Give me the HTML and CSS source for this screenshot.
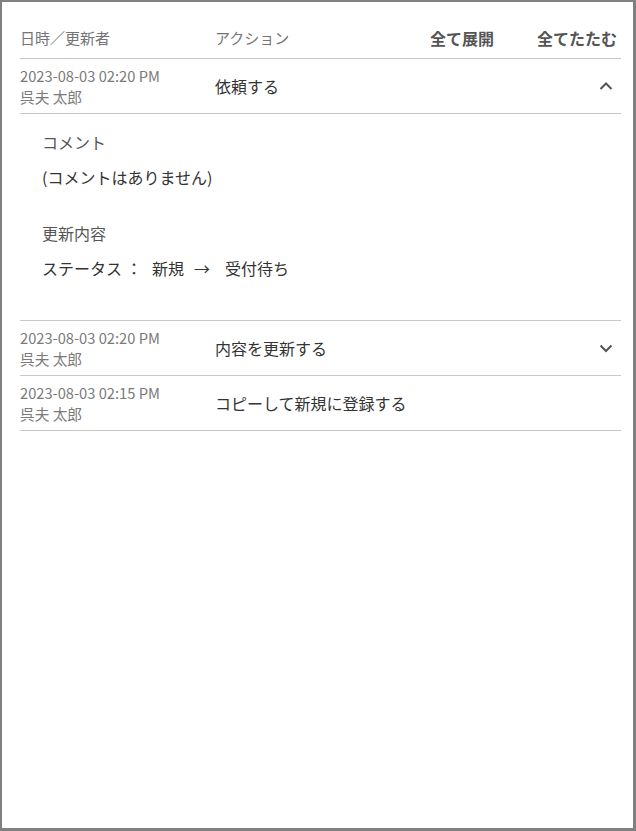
FILE: index.html
```html
<!DOCTYPE html>
<html>
<head>
	<meta charset="utf-8">
	<title>履歴</title>
	<link rel="stylesheet" href="styles.css">
</head>
<body>
	<div id="box">
		<div class="head">
			<div class="col-date">日時／更新者</div>
			<div class="col-action">アクション</div>
			<div class="head-btns">
				<span class="btn">全て展開</span>
				<span class="btn">全てたたむ</span>
			</div>
		</div>

		<div class="row">
			<div class="col-date">
				<div class="date">2023-08-03 02:20 PM</div>
				<div class="name">呉夫 太郎</div>
			</div>
			<div class="col-action action">依頼する</div>
			<svg class="chev" width="20" height="20" viewBox="0 0 20 20"><polyline points="4.5,13 10,7.5 15.5,13" fill="none" stroke="#555" stroke-width="2"/></svg>
		</div>
		<div class="detail">
			<p class="label">コメント</p>
			<p class="value">(コメントはありません)</p>
			<p class="label sec">更新内容</p>
			<p class="value status">
				<span>ステータス</span>
				<span class="colon">：</span>
				<span class="from">新規</span>
				<span class="arrow">→</span>
				<span class="to">受付待ち</span>
			</p>
		</div>

		<div class="row">
			<div class="col-date">
				<div class="date">2023-08-03 02:20 PM</div>
				<div class="name">呉夫 太郎</div>
			</div>
			<div class="col-action action">内容を更新する</div>
			<svg class="chev" width="20" height="20" viewBox="0 0 20 20"><polyline points="4.5,7.5 10,13 15.5,7.5" fill="none" stroke="#555" stroke-width="2"/></svg>
		</div>

		<div class="row">
			<div class="col-date">
				<div class="date">2023-08-03 02:15 PM</div>
				<div class="name">呉夫 太郎</div>
			</div>
			<div class="col-action action">コピーして新規に登録する</div>
		</div>
	</div>
</body>
</html>
```

FILE: styles.css
```css
*{
	margin: 0;
	padding: 0;
}
body{
	font-family: "Noto Sans CJK JP", "Noto Sans", sans-serif;
	background: #fff;
}
#box{
	width: 636px;
	height: 831px;
	box-sizing: border-box;
	border-style: solid;
	border-color: #808080;
	border-width: 2px 3px 3px 2px;
	padding: 0 12px 0 18px;
	color: #333;
}
.head{
	display: flex;
	align-items: center;
	padding: 24px 4px 8px 0;
	line-height: 24px;
	border-bottom: 1px solid #c4c4c4;
	font-size: 15px;
	color: #747474;
}
.col-date{
	width: 195px;
	flex-shrink: 0;
}
.col-action{
	flex: 1;
}
.head-btns{
	display: flex;
	gap: 43px;
}
.btn{
	font-size: 16px;
	font-weight: bold;
	color: #555;
	cursor: pointer;
}
.row{
	display: flex;
	align-items: center;
	padding: 6px 0;
	border-bottom: 1px solid #c8c8c8;
}
.date, .name{
	font-size: 14.7px;
	line-height: 21px;
	color: #7a7a7a;
}
.action{
	font-size: 16px;
	color: #333;
}
.chev{
	margin-right: 5px;
	flex-shrink: 0;
}
.detail{
	padding: 16px 22px 40px;
	border-bottom: 1px solid #c8c8c8;
	font-size: 16px;
	line-height: 24px;
}
.label{
	color: #555;
	margin-bottom: 11px;
}
.value{
	color: #333;
}
.sec{
	margin-top: 32px;
}
.status{
	display: flex;
}
.colon{
	margin-left: 4px;
}
.from{
	margin-left: 10px;
}
.arrow{
	margin-left: 10px;
}
.to{
	margin-left: 15px;
}
```
